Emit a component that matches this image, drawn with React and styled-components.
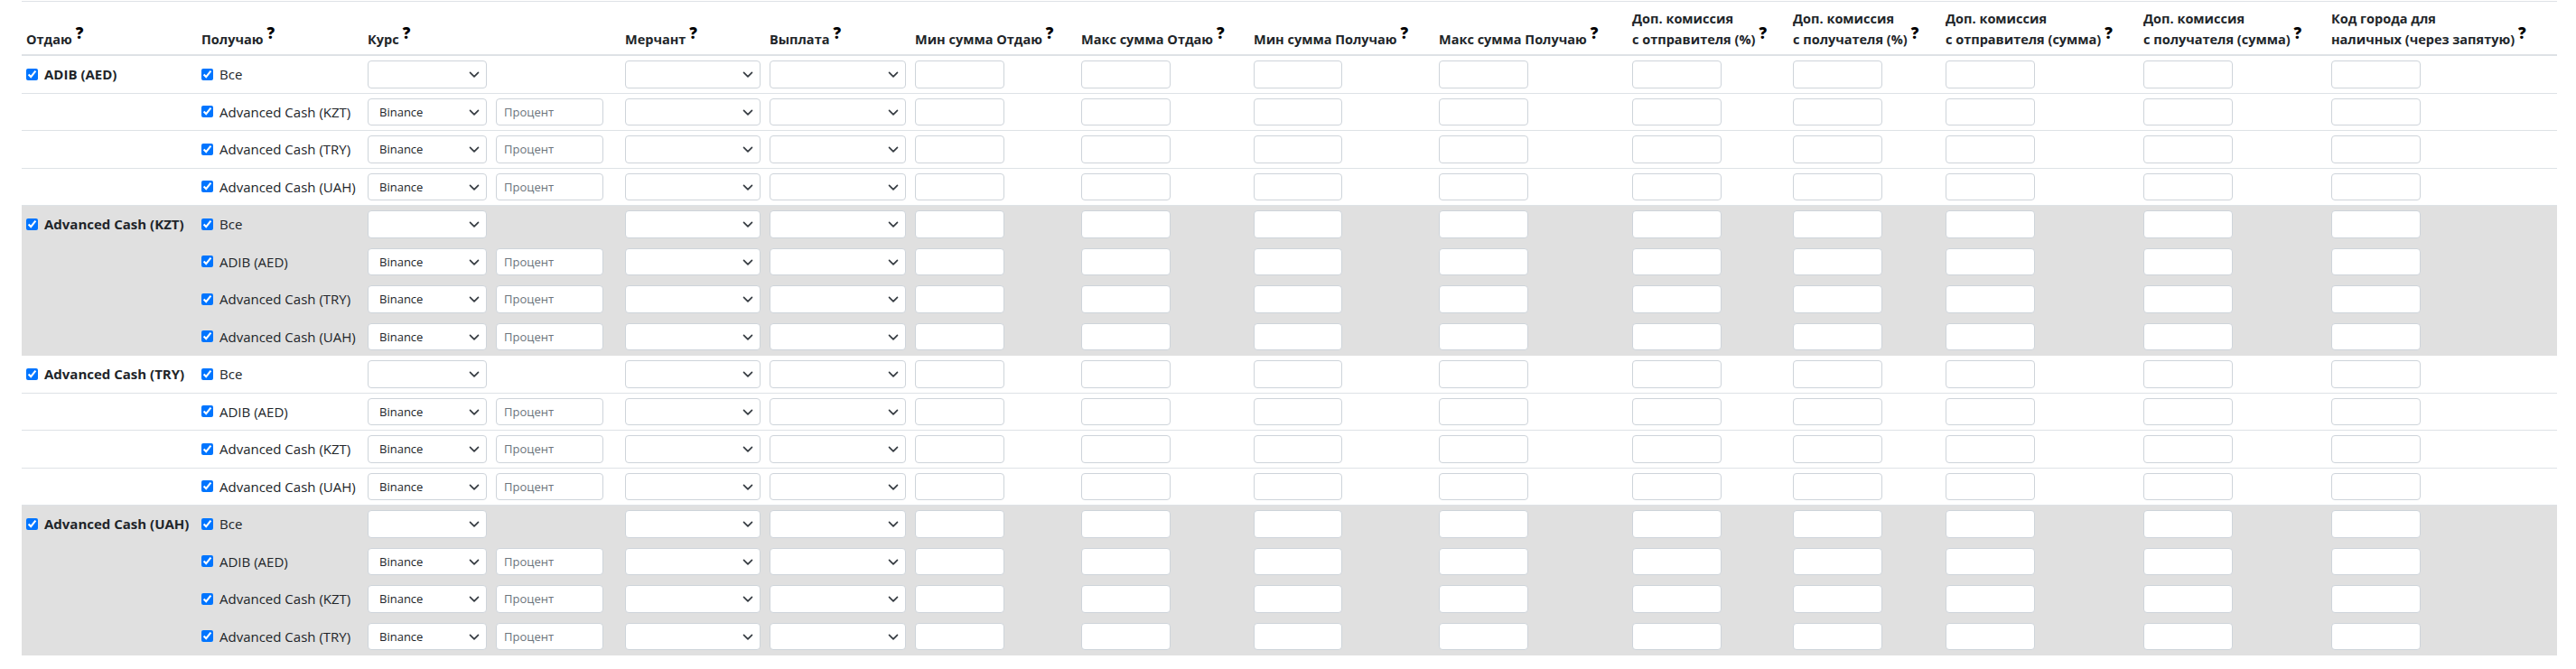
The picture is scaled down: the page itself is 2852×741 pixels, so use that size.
import styled, { createGlobalStyle } from "styled-components";

const GlobalStyle = createGlobalStyle`
  body {
    margin: 0;
    background: #fff;
    font-family: "Open Sans", "Noto Sans", Arial, sans-serif;
    color: #212529;
  }
`;

const currencies = ["ADIB (AED)", "Advanced Cash (KZT)", "Advanced Cash (TRY)", "Advanced Cash (UAH)"];

// widths of every table column, px
const colWidths = [194, 184, 142, 143, 160, 161, 184, 191, 205, 214, 178, 169, 219, 208, 255];

const headers = [
  { title: ["Отдаю"] },
  { title: ["Получаю"] },
  { title: ["Курс"], span: 2 },
  { title: ["Мерчант"] },
  { title: ["Выплата"] },
  { title: ["Мин сумма Отдаю"] },
  { title: ["Макс сумма Отдаю"] },
  { title: ["Мин сумма Получаю"] },
  { title: ["Макс сумма Получаю"] },
  { title: ["Доп. комиссия", "с отправителя (%)"] },
  { title: ["Доп. комиссия", "с получателя (%)"] },
  { title: ["Доп. комиссия", "с отправителя (сумма)"] },
  { title: ["Доп. комиссия", "с получателя (сумма)"] },
  { title: ["Код города для", "наличных (через запятую)"] },
];

const amountWidths = [99, 99, 98, 99, 99, 99, 99, 99, 99];

function Chevron() {
  return (
    <ChevronIcon width="12" height="12" viewBox="0 0 16 16">
      <path d="M2 5l6 6 6-6" fill="none" stroke="#343a40" strokeWidth="2.2" strokeLinecap="round" strokeLinejoin="round" />
    </ChevronIcon>
  );
}

function SelectField({ w, value }) {
  return (
    <SelectWrap $w={w}>
      <Select defaultValue={value || ""}>
        <option value=""></option>
        <option value="Binance">Binance</option>
      </Select>
      <Chevron />
    </SelectWrap>
  );
}

function App() {
  return (
    <Page>
      <GlobalStyle />
      <Table>
        <colgroup>
          {colWidths.map((w, i) => <Col key={i} $w={w} />)}
        </colgroup>
        <thead>
          <tr>
            {headers.map((h, i) => (
              <HeadCell key={i} colSpan={h.span || 1}>
                {h.title.map((line, k) => (
                  <span key={k}>
                    {k > 0 && <br />}
                    {line}
                  </span>
                ))}
                <Hint>?</Hint>
              </HeadCell>
            ))}
          </tr>
        </thead>
        <tbody>
          {currencies.map((src, g) => {
            const targets = ["Все", ...currencies.filter((c) => c !== src)];
            return targets.map((target, j) => (
              <Row key={src + target} $shade={g % 2 === 1}>
                <Cell>
                  {j === 0 && (
                    <CheckLabel>
                      <Check type="checkbox" defaultChecked />
                      <LabelText $bold>{src}</LabelText>
                    </CheckLabel>
                  )}
                </Cell>
                <Cell>
                  <CheckLabel>
                    <Check type="checkbox" defaultChecked />
                    <LabelText>{target}</LabelText>
                  </CheckLabel>
                </Cell>
                <Cell>
                  <SelectField w={132} value={j === 0 ? "" : "Binance"} />
                </Cell>
                <Cell>{j > 0 && <TextInput $w={119} placeholder="Процент" />}</Cell>
                <Cell>
                  <SelectField w={150} />
                </Cell>
                <Cell>
                  <SelectField w={151} />
                </Cell>
                {amountWidths.map((w, k) => (
                  <Cell key={k}>
                    <TextInput $w={w} />
                  </Cell>
                ))}
              </Row>
            ));
          })}
        </tbody>
      </Table>
    </Page>
  );
}

const Page = styled.div`
  padding: 1px 21px 0 24px;
`;

const Table = styled.table`
  width: 2807px;
  table-layout: fixed;
  border-collapse: separate;
  border-spacing: 0;
  border-top: 1px solid #dee2e6;
`;

const Col = styled.col`
  width: ${(p) => p.$w}px;
`;

const HeadCell = styled.th`
  text-align: left;
  vertical-align: bottom;
  padding: 7px 5px 5px;
  font-size: 14.5px;
  line-height: 23px;
  font-weight: 700;
  white-space: nowrap;
  color: #212529;
  border-bottom: 2px solid #dee2e6;
`;

const Hint = styled.sup`
  margin-left: 4px;
  font-size: 17px;
  font-weight: 800;
  color: #000;
  line-height: 0;
  vertical-align: 6px;
`;

const Row = styled.tr`
  background: ${(p) => (p.$shade ? "#e0e0e0" : "#fff")};
  td {
    border-bottom-color: ${(p) => (p.$shade ? "#e0e0e0" : "#dee2e6")};
  }
`;

const Cell = styled.td`
  padding: 5px;
  vertical-align: middle;
  border-bottom: 1px solid #dee2e6;
  white-space: nowrap;
`;

const CheckLabel = styled.label`
  display: flex;
  align-items: center;
  gap: 7px;
`;

const Check = styled.input`
  width: 13px;
  height: 13px;
  margin: 0;
  accent-color: #0075ff;
`;

const LabelText = styled.span`
  font-size: 15px;
  line-height: 22px;
  font-weight: ${(p) => (p.$bold ? 700 : 400)};
  color: #212529;
`;

const SelectWrap = styled.div`
  position: relative;
  width: ${(p) => p.$w}px;
`;

const Select = styled.select`
  display: block;
  width: 100%;
  height: 30.5px;
  box-sizing: border-box;
  appearance: none;
  border: 1px solid #ced4da;
  border-radius: 4px;
  background: #fff;
  padding: 0 28px 0 12px;
  font-family: "Open Sans", "Noto Sans", Arial, sans-serif;
  font-size: 13px;
  color: #212529;
  outline: none;
`;

const ChevronIcon = styled.svg`
  position: absolute;
  right: 8px;
  top: 50%;
  transform: translateY(-45%);
  pointer-events: none;
`;

const TextInput = styled.input`
  display: block;
  width: ${(p) => p.$w}px;
  height: 30.5px;
  box-sizing: border-box;
  border: 1px solid #ced4da;
  border-radius: 4px;
  background: #fff;
  padding: 0 8px;
  font-family: "Open Sans", "Noto Sans", Arial, sans-serif;
  font-size: 13px;
  color: #212529;
  outline: none;
  &::placeholder {
    color: #6c757d;
  }
`;

export default App;
